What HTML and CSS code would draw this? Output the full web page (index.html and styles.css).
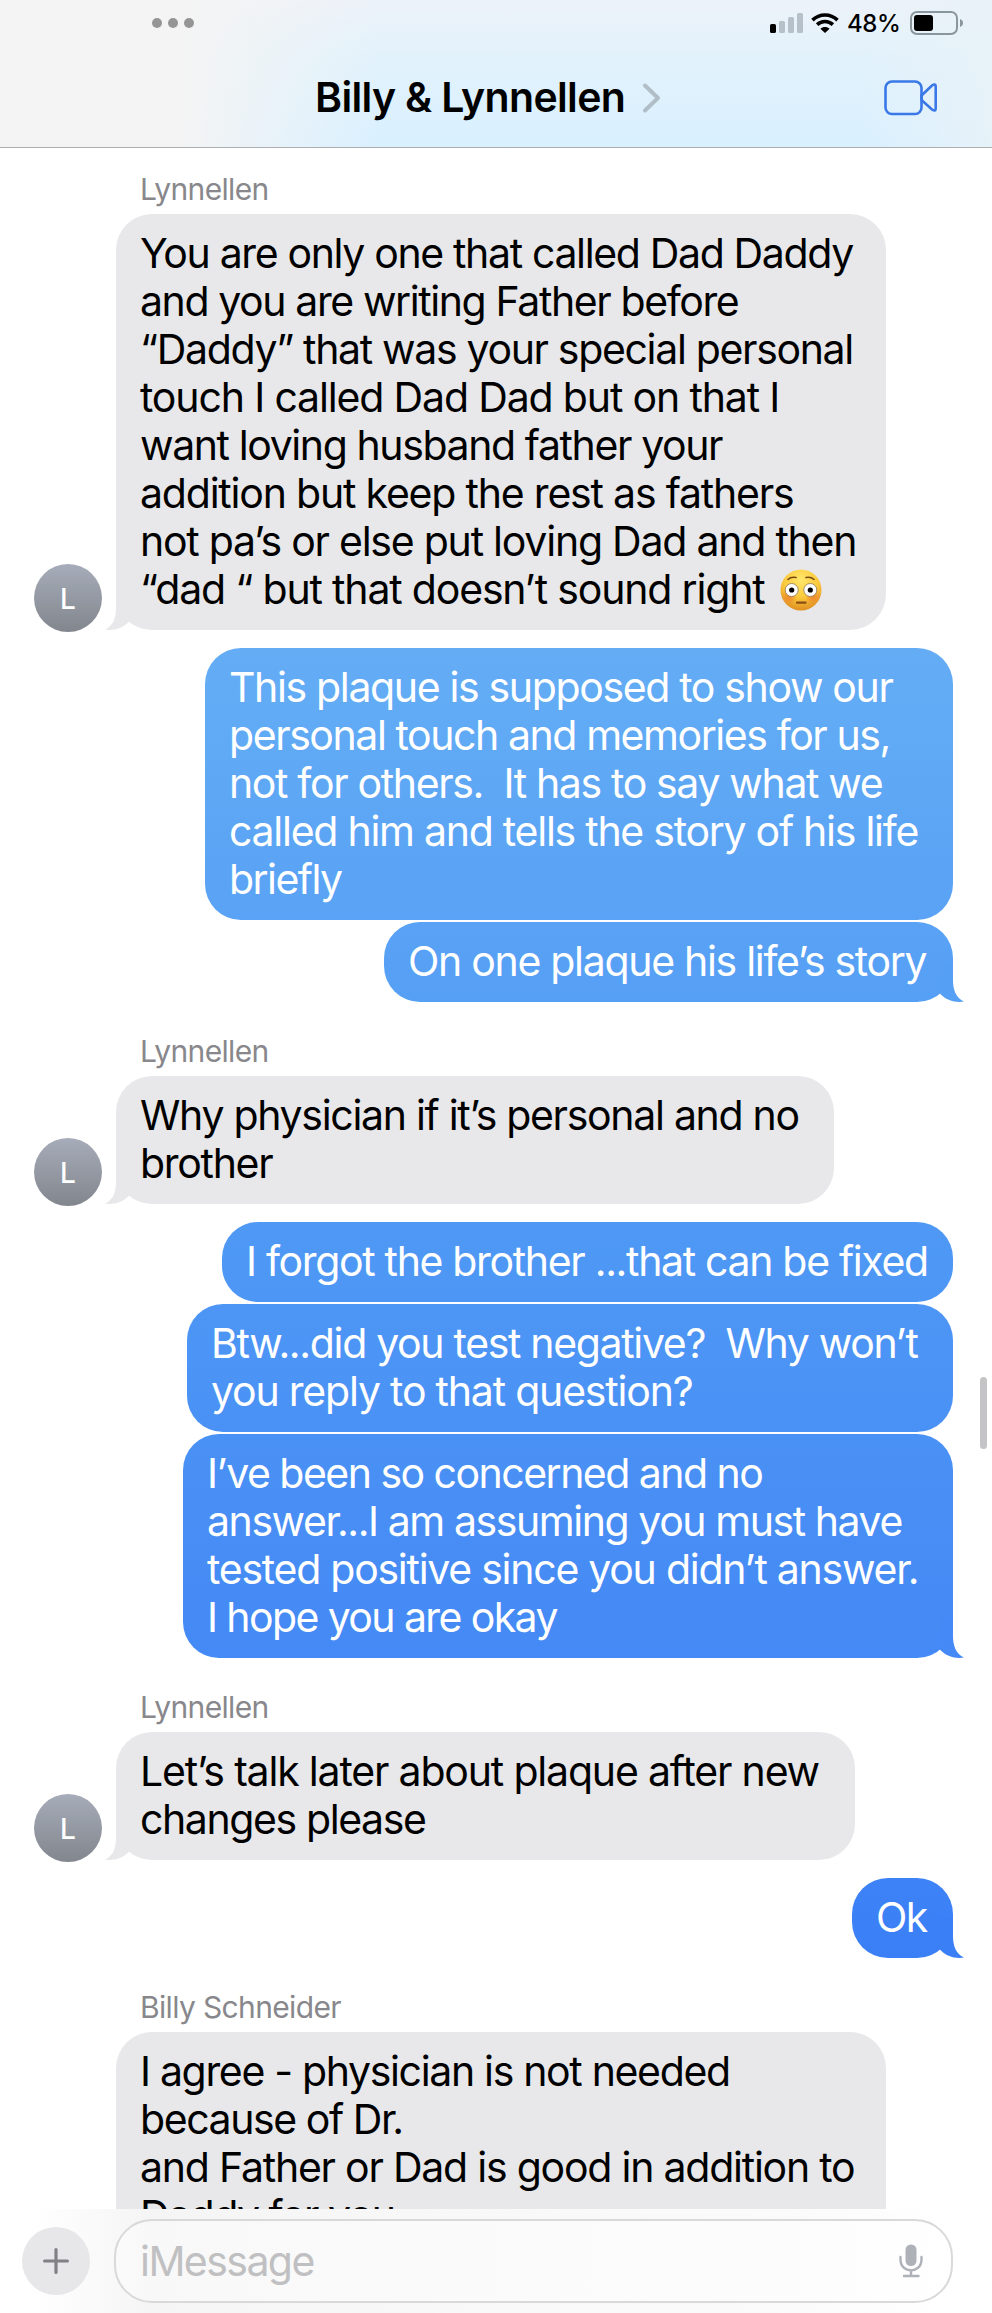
FILE: index.html
```html
<!DOCTYPE html>
<html lang="en">
<head>
<meta charset="utf-8">
<title>Billy &amp; Lynnellen</title>
<link rel="stylesheet" href="styles.css">
</head>
<body>
<svg class="defs" width="0" height="0">
  <symbol id="tail" viewBox="0 0 24 40"><path d="M11 0V18C11 28 8 36 0 39.5C9 41 18 38 24 31.7V0Z" fill="currentColor"/></symbol>
</svg>
<div class="phone">
  <header class="top">
    <div class="status">
      <svg class="dots" width="44" height="12" viewBox="0 0 44 12" fill="#959595"><circle cx="6" cy="6" r="5"/><circle cx="22" cy="6" r="5"/><circle cx="38" cy="6" r="5"/></svg>
      <div class="indicators">
        <svg width="33" height="20" viewBox="0 0 33 20"><rect y="11" width="6" height="9" rx="1.6"/><g fill="#b5c0c8"><rect x="9" y="8" width="6" height="12" rx="1.6"/><rect x="18" y="4" width="6" height="16" rx="1.6"/><rect x="27" width="6" height="20" rx="1.6"/></g></svg>
        <svg class="wifi" width="28" height="20" viewBox="0 0 28 20"><g fill="none" stroke="#000" stroke-width="3.6"><path d="M1.5 7.1C8.5 .2 19.5 .2 26.500 7.1"/><path d="M6.100 11.600C10.600 7.400 17.400 7.400 21.900 11.600"/></g><path d="M9.400 15.700C12 13.300 16 13.300 18.600 15.700L14 20Z"/></svg>
        <span class="percent">48%</span>
        <svg width="54" height="24" viewBox="0 0 54 24"><rect x="1" y="1" width="46" height="22" rx="6" fill="none" stroke="#8a969d" stroke-width="2"/><rect x="4" y="4" width="19" height="16" rx="3"/><path d="M50 8C54 9.300 54 14.700 50 16Z" fill="#8a969d"/></svg>
      </div>
    </div>
    <div class="titlebar">
      <h1>Billy &amp; Lynnellen</h1>
      <svg class="chevron" width="20" height="32" viewBox="0 0 20 32" fill="none" stroke="#b1bec7" stroke-width="4" stroke-linecap="round" stroke-linejoin="round"><path d="M3 3.500L16 16L3 28.500"/></svg>
      <svg class="video" width="54" height="36" viewBox="0 0 54 36" fill="none" stroke="#3b78e7" stroke-width="2.600" stroke-linejoin="round"><rect x="1.500" y="1.500" width="36" height="32.500" rx="6.500"/><path d="M37.500 15.500L48 5.500Q51.700 3 51.700 6.500V28.500Q51.700 32 48 29.500L37.500 20Z"/></svg>
    </div>
  </header>

  <main class="chat">
    <div class="name">Lynnellen</div>
    <div class="row in">
      <div class="avatar">L</div>
      <div class="bubble w-770">
        <span class="ln k35">You are only one that called Dad Daddy</span>
        <span class="ln k40">and you are writing Father before</span>
        <span class="ln k33">“Daddy” that was your special personal</span>
        <span class="ln k15">touch I called Dad Dad but on that I</span>
        <span class="ln k40">want loving husband father your</span>
        <span class="ln k20">addition but keep the rest as fathers</span>
        <span class="ln k23">not pa’s or else put loving Dad and then</span>
        <span class="ln k18">“dad “ but that doesn’t sound right<svg class="emoji" width="42" height="42" viewBox="0 0 42 42"><defs><radialGradient id="face" cx=".5" cy=".25" r=".78"><stop offset="0" stop-color="#ffe76a"/><stop offset=".55" stop-color="#fbc93c"/><stop offset="1" stop-color="#dc8a1e"/></radialGradient><radialGradient id="blush"><stop offset="0" stop-color="#ef6f2e" stop-opacity=".65"/><stop offset="1" stop-color="#ef6f2e" stop-opacity="0"/></radialGradient></defs><circle cx="21" cy="21" r="20.500" fill="url(#face)"/><circle cx="9" cy="28" r="8" fill="url(#blush)"/><circle cx="33" cy="28" r="8" fill="url(#blush)"/><g fill="none" stroke="#7a4a12" stroke-width="1.600" stroke-linecap="round"><path d="M8 10.500Q11 7.500 16 8.500M26 8.500Q31 7.500 34 10.500"/></g><g fill="#fff" stroke="#8d7650" stroke-width=".8"><circle cx="11.700" cy="21" r="6.500"/><circle cx="30.300" cy="21" r="6.500"/></g><circle cx="11.700" cy="21" r="2.600"/><circle cx="30.300" cy="21" r="2.600"/><path d="M17 33.700H25.500" stroke="#8a4d14" stroke-width="2.200" stroke-linecap="round"/></svg></span>
        <svg class="tail"><use href="#tail"/></svg>
      </div>
    </div>

    <div class="row out after-in">
      <div class="bubble w-748 b1">
        <span class="ln k35">This plaque is supposed to show our</span>
        <span class="ln k43">personal touch and memories for us,</span>
        <span class="ln k35">not for others.  It has to say what we</span>
        <span class="ln k26">called him and tells the story of his life</span>
        <span class="ln k55">briefly</span>
      </div>
    </div>
    <div class="row out">
      <div class="bubble w-569 b2">
        <span class="ln k30">On one plaque his life’s story</span>
        <svg class="tail"><use href="#tail"/></svg>
      </div>
    </div>

    <div class="name next">Lynnellen</div>
    <div class="row in">
      <div class="avatar">L</div>
      <div class="bubble w-718">
        <span class="ln k30">Why physician if it’s personal and no</span>
        <span class="ln k30">brother</span>
        <svg class="tail"><use href="#tail"/></svg>
      </div>
    </div>

    <div class="row out after-in">
      <div class="bubble w-731 b3"><span class="ln k33">I forgot the brother ...that can be fixed</span></div>
    </div>
    <div class="row out">
      <div class="bubble w-766 b4">
        <span class="ln k33">Btw...did you test negative?  Why won’t</span>
        <span class="ln k20">you reply to that question?</span>
      </div>
    </div>
    <div class="row out">
      <div class="bubble w-770 b5">
        <span class="ln k50">I’ve been so concerned and no</span>
        <span class="ln k45">answer...I am assuming you must have</span>
        <span class="ln k26">tested positive since you didn’t answer.</span>
        <span class="ln k60">I hope you are okay</span>
        <svg class="tail"><use href="#tail"/></svg>
      </div>
    </div>

    <div class="name next">Lynnellen</div>
    <div class="row in">
      <div class="avatar">L</div>
      <div class="bubble w-739">
        <span class="ln k18">Let’s talk later about plaque after new</span>
        <span class="ln k40">changes please</span>
        <svg class="tail"><use href="#tail"/></svg>
      </div>
    </div>

    <div class="row out after-in">
      <div class="bubble w-101 b6"><span class="ln k60">Ok</span><svg class="tail"><use href="#tail"/></svg></div>
    </div>

    <div class="name next">Billy Schneider</div>
    <div class="row in">
      <div class="bubble w-770 last">
        <span class="ln k33">I agree - physician is not needed</span>
        <span class="ln k45">because of Dr.</span>
        <span class="ln k23">and Father or Dad is good in addition to</span>
        <span class="ln k50">Daddy for you</span>
      </div>
    </div>
  </main>

  <footer class="composer">
    <div class="plus"><svg width="26" height="26" viewBox="0 0 26 26" stroke="#808085" stroke-width="3.200" stroke-linecap="round"><path d="M13 1.600V24.400M1.600 13H24.400"/></svg></div>
    <div class="field">
      <span class="placeholder">iMessage</span>
      <svg width="24" height="34" viewBox="0 0 24 34"><rect x="6.500" y=".5" width="11" height="21.500" rx="5.300" fill="#aeb1b8"/><path d="M1.500 13V15.500C1.500 30 22.500 30 22.500 15.500V13M12 27V32M5 32H19.500" fill="none" stroke="#aeb1b8" stroke-width="2.400" stroke-linecap="round"/></svg>
    </div>
  </footer>
  <div class="scrollbar"></div>
</div>
</body>
</html>
```
FILE: styles.css
```css
* { box-sizing: border-box; }
body { margin: 0; background: #fff; font-family: Inter, "Liberation Sans", sans-serif; color: #000; }
svg { display: block; flex: none; }
.defs { position: absolute; }
.phone { position: relative; width: 992px; height: 2313px; overflow: hidden; display: flex; flex-direction: column; background: #fff; }

.top {
  flex: none; height: 148px; border-bottom: 1px solid #abafb2;
  background:
    linear-gradient(90deg, #f4f4f4 0, #f4f4f4 180px, rgba(244,244,244,0) 380px),
    linear-gradient(90deg, rgba(238,243,247,0) 860px, rgba(232,242,248,.9) 992px),
    linear-gradient(180deg, #edf2f9 0, #e2f2fb 55px, #d9f0ff 147px);
}
.status { display: flex; justify-content: space-between; height: 47px; padding: 11px 28px 0 151px; }
.dots { margin-top: 6px; }
.indicators { display: flex; height: 24px; }
.indicators svg:first-child { margin-top: 2px; }
.wifi { margin: 2px 0 0 8px; }
.percent { width: 71px; padding-left: 8px; font-size: 24px; font-weight: 500; line-height: 25px; letter-spacing: -.45px; }
.titlebar { display: flex; height: 100px; padding-left: 315px; }
h1 { margin: 25px 0 0; width: 327px; font-size: 41px; font-weight: 600; line-height: 50px; letter-spacing: -.65px; white-space: nowrap; }
.chevron { margin-top: 35px; }
.video { margin: 33px 0 0 222px; }

.chat { flex: none; height: 2061px; overflow: hidden; }
.name { height: 66px; padding: 23px 0 0 140px; font-size: 30px; line-height: 36px; letter-spacing: -.65px; color: #88888c; }
.name.next { height: 74px; padding-top: 31px; }
.row { display: flex; margin-bottom: 2px; }
.in { padding-left: 116px; margin-bottom: 0; position: relative; }
.out { justify-content: flex-end; padding-right: 39px; }
.after-in { margin-top: 18px; }
.out:has(.tail) { margin-bottom: 0; }
.bubble { position: relative; flex: none; padding: 15px 0 17px 24px; border-radius: 36px; background: #e8e8ea; color: #e8e8ea; }
.ln { display: block; height: 48px; line-height: 48px; font-size: 41px; white-space: pre; color: #000; }
.out .ln { color: #fff; }
.last { border-radius: 36px 36px 0 0; }

.w-770 { width: 770px; }
.w-766 { width: 766px; }
.w-748 { width: 748px; }
.w-739 { width: 739px; }
.w-731 { width: 731px; }
.w-718 { width: 718px; }
.w-569 { width: 569px; }
.w-101 { width: 101px; }

.b1 { background: linear-gradient(#64adf5, #59a2f5); }
.b2 { background: linear-gradient(#59a2f5, #559ff5); color: #559ff5; }
.b3 { background: linear-gradient(#4f99f5, #4d96f5); }
.b4 { background: linear-gradient(#4d96f5, #4a91f5); }
.b5 { background: linear-gradient(#4a91f5, #4489f5); color: #4489f5; }
.b6 { background: linear-gradient(#3e82f7, #3b7ff6); color: #3b7ff6; }

.k15 { letter-spacing: -1.15px; }
.k18 { letter-spacing: -1.18px; }
.k20 { letter-spacing: -1.2px; }
.k23 { letter-spacing: -1.23px; }
.k26 { letter-spacing: -1.26px; }
.k30 { letter-spacing: -1.3px; }
.k33 { letter-spacing: -1.33px; }
.k35 { letter-spacing: -1.35px; }
.k40 { letter-spacing: -1.4px; }
.k43 { letter-spacing: -1.43px; }
.k45 { letter-spacing: -1.43px; }
.k50 { letter-spacing: -1.52px; }
.k55 { letter-spacing: -1.55px; }
.k60 { letter-spacing: -1.6px; }

.tail { position: absolute; width: 24px; height: 40px; bottom: 0; left: -11px; }
.out .tail { left: auto; right: -11px; transform: scaleX(-1); }
.avatar {
  position: absolute; left: 34px; bottom: -2px; width: 68px; height: 68px; border-radius: 50%;
  background: linear-gradient(#a6acb9, #82868d); color: #fff;
  font-size: 28px; font-weight: 500; line-height: 71px; text-align: center;
}
.emoji { display: inline-block; vertical-align: -7px; margin-left: 16px; }

.composer {
  flex: none; display: flex; height: 104px; padding: 10px 39px 0 22px;
  background: linear-gradient(90deg, #fff 30px, #f5f5f5 150px, #f8f8f8 420px, #fbfbfb 800px, #fff 950px);
}
.plus { display: flex; align-items: center; justify-content: center; width: 68px; height: 68px; margin: 8px 24px 0 0; border-radius: 50%; background: #e7e7e9; }
.field { display: flex; align-items: center; justify-content: space-between; flex: 1; height: 84px; padding: 0 28px 0 24px; border: 2px solid #d9d9da; border-radius: 38px; background: rgba(255,255,255,.35); }
.placeholder { font-size: 41px; line-height: 48px; letter-spacing: -1.55px; color: #c0c0c2; }
.scrollbar { position: absolute; right: 5px; top: 1377px; width: 7px; height: 72px; border-radius: 4px; background: #c4c4c6; }
```
